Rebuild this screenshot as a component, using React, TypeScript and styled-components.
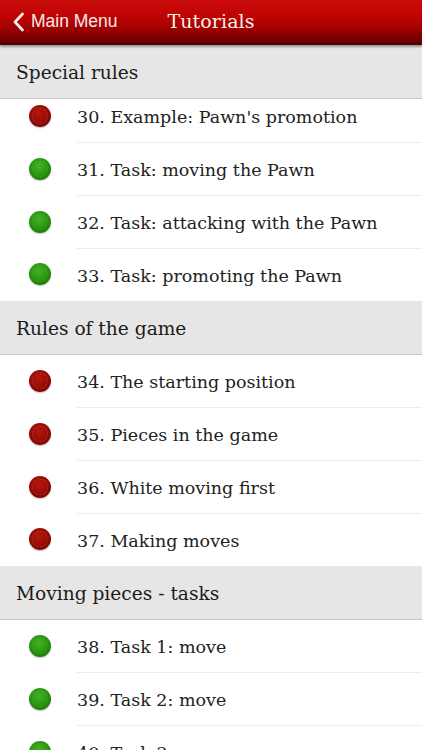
import React from "react";
import styled, { createGlobalStyle } from "styled-components";

const GlobalStyle = createGlobalStyle`
  html, body { margin: 0; padding: 0; background: #ffffff; }
  body { width: 422px; height: 750px; overflow: hidden; }
  * { box-sizing: border-box; }
`;

const Screen = styled.div`
  width: 422px;
  height: 750px;
  overflow: hidden;
  display: flex;
  flex-direction: column;
  background: #fff;
`;

const NavBar = styled.div`
  position: relative;
  z-index: 3;
  height: 45px;
  flex: none;
  display: grid;
  grid-template-columns: 1fr auto 1fr;
  align-items: center;
  background: linear-gradient(to bottom, #c90a08 0%, #bf0504 35%, #a30000 62%, #6a0000 92%, #4a0000 100%);
  box-shadow: 0 2px 2px rgba(0, 0, 0, 0.35);
`;

const BackButton = styled.div`
  display: flex;
  align-items: center;
  gap: 6px;
  padding-left: 12px;
  color: #f6eaea;
  font-family: "Liberation Sans", Arial, sans-serif;
  font-size: 17.5px;
  padding-bottom: 2px;
`;

const Title = styled.div`
  color: #f8f0e8;
  font-family: "DejaVu Serif", "Liberation Serif", serif;
  font-size: 19px;
  padding-bottom: 3px;
  letter-spacing: 0.1px;
`;

const List = styled.div`
  flex: 1;
  overflow: hidden;
  display: flex;
  flex-direction: column;
`;

const SectionHeader = styled.div`
  position: relative;
  z-index: 2;
  height: 54px;
  flex: none;
  display: flex;
  align-items: center;
  padding-left: 16px;
  padding-top: 1px;
  background: #e6e6e6;
  border-bottom: 1px solid #c9c9c9;
  color: #1b1b1b;
  font-family: "DejaVu Serif", "Liberation Serif", serif;
  font-size: 18.6px;
`;

const Row = styled.div<{ $offset?: number }>`
  height: 52.75px;
  flex: none;
  display: flex;
  align-items: center;
  margin-top: ${(p) => (p.$offset ? `-${p.$offset}px` : "0")};
`;

const DotCell = styled.div`
  width: 77px;
  flex: none;
  display: flex;
  justify-content: flex-start;
  padding-left: 29px;
  padding-bottom: 1px;
`;

const Dot = styled.div<{ $done: boolean }>`
  width: 22px;
  height: 22px;
  border-radius: 50%;
  background: ${(p) =>
    p.$done
      ? "radial-gradient(circle at 45% 38%, #44b226 0%, #2f9a14 40%, #1c7a06 75%, #135a02 100%)"
      : "radial-gradient(circle at 45% 38%, #b51810 0%, #9a0c06 45%, #7a0402 80%, #5c0000 100%)"};
  box-shadow: 0 1px 1.5px rgba(0, 0, 0, 0.25);
  position: relative;
  &::after {
    content: "";
    position: absolute;
    inset: 3px;
    border-radius: 50%;
    border: 1px dotted
      ${(p) => (p.$done ? "rgba(120, 210, 90, 0.35)" : "rgba(230, 110, 100, 0.45)")};
  }
`;

const Label = styled.div<{ $last?: boolean }>`
  flex: 1;
  height: 100%;
  display: flex;
  align-items: center;
  padding-top: 2px;
  border-bottom: ${(p) => (p.$last ? "none" : "1px solid #ececec")};
  color: #222;
  font-family: "DejaVu Serif", "Liberation Serif", serif;
  font-size: 17.5px;
`;

type Item = { n: number; title: string; done: boolean };
type Section = { title: string; items: Item[] };

const sections: Section[] = [
  {
    title: "Special rules",
    items: [
      { n: 30, title: "Example: Pawn's promotion", done: false },
      { n: 31, title: "Task: moving the Pawn", done: true },
      { n: 32, title: "Task: attacking with the Pawn", done: true },
      { n: 33, title: "Task: promoting the Pawn", done: true },
    ],
  },
  {
    title: "Rules of the game",
    items: [
      { n: 34, title: "The starting position", done: false },
      { n: 35, title: "Pieces in the game", done: false },
      { n: 36, title: "White moving first", done: false },
      { n: 37, title: "Making moves", done: false },
    ],
  },
  {
    title: "Moving pieces - tasks",
    items: [
      { n: 38, title: "Task 1: move", done: true },
      { n: 39, title: "Task 2: move", done: true },
      { n: 40, title: "Task 3: move", done: true },
    ],
  },
];

const Chevron = () => (
  <svg width="13" height="20" viewBox="0 0 13 20">
    <path d="M10.5 2 L3 10 L10.5 18" fill="none" stroke="#f6eaea" strokeWidth="2.8" strokeLinecap="round" strokeLinejoin="round" />
  </svg>
);

export default function App() {
  return (
    <Screen>
      <GlobalStyle />
      <NavBar>
        <BackButton>
          <Chevron />
          <span>Main Menu</span>
        </BackButton>
        <Title>Tutorials</Title>
        <div />
      </NavBar>
      <List>
        {sections.map((s, si) => (
          <React.Fragment key={s.title}>
            <SectionHeader>{s.title}</SectionHeader>
            {s.items.map((it, i) => {
              const last = i === s.items.length - 1;
              return (
                <Row key={it.n} $offset={si === 0 && i === 0 ? 8.75 : 0}>
                  <DotCell>
                    <Dot $done={it.done} />
                  </DotCell>
                  <Label $last={last}>
                    {it.n}. {it.title}
                  </Label>
                </Row>
              );
            })}
          </React.Fragment>
        ))}
      </List>
    </Screen>
  );
}
